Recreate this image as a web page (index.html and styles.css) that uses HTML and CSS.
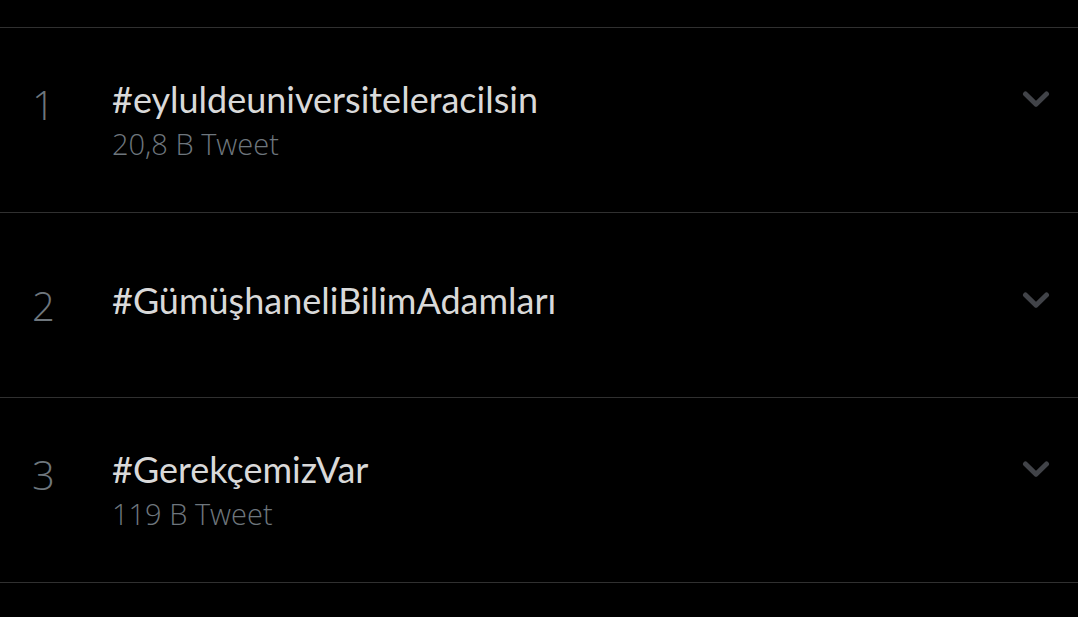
FILE: index.html
```html
<!DOCTYPE html>
<html lang="tr">
<head>
    <meta charset="UTF-8">
    <meta name="viewport" content="width=device-width, initial-scale=1.0">
    <title>Gündemler</title>
    <link rel="stylesheet" href="styles.css">
</head>
<body>

<ol class="trends">
    <li class="trend">
        <span class="rank">1</span>
        <div class="trend-info">
            <a class="trend-name" href="#">#eyluldeuniversiteleracilsin</a>
            <span class="trend-count">20,8 B Tweet</span>
        </div>
        <button class="trend-menu" type="button" aria-label="Diğer">
            <svg viewBox="0 0 28 18"><path d="M3.5 4L14 14.2L24.5 4"/></svg>
        </button>
    </li>
    <li class="trend">
        <span class="rank">2</span>
        <div class="trend-info">
            <a class="trend-name" href="#">#GümüşhaneliBilimAdamları</a>
        </div>
        <button class="trend-menu" type="button" aria-label="Diğer">
            <svg viewBox="0 0 28 18"><path d="M3.5 4L14 14.2L24.5 4"/></svg>
        </button>
    </li>
    <li class="trend">
        <span class="rank">3</span>
        <div class="trend-info">
            <a class="trend-name" href="#">#GerekçemizVar</a>
            <span class="trend-count">119 B Tweet</span>
        </div>
        <button class="trend-menu" type="button" aria-label="Diğer">
            <svg viewBox="0 0 28 18"><path d="M3.5 4L14 14.2L24.5 4"/></svg>
        </button>
    </li>
</ol>

</body>
</html>
```
FILE: styles.css
```css
body {
    margin: 0;
    background-color: #000;
    font-family: "Open Sans", "Noto Sans", sans-serif;
}

.trends {
    list-style: none;
    margin: 0;
    padding: 27px 0 0;
    border-bottom: 1px solid #303030;
}

.trend {
    display: grid;
    grid-template-columns: 80px 1fr 28px;
    align-content: center;
    min-height: 184px;
    padding: 0 28px 0 32px;
    border-top: 1px solid #303030;
}

.rank {
    padding: 5px 0 3px;
    font-size: 40px;
    font-weight: 300;
    line-height: 48px;
    color: #6e767d;
}

.trend-info {
    display: flex;
    flex-direction: column;
    align-items: flex-start;
    gap: 2px;
}

.trend-name {
    font-family: Lato, sans-serif;
    font-size: 36px;
    line-height: 46px;
    color: #d9d9d9;
    text-decoration: none;
}

.trend-count {
    font-size: 29px;
    font-weight: 300;
    line-height: 40px;
    color: #6e767d;
}

.trend-menu {
    display: flex;
    align-items: center;
    height: 46px;
    padding: 0;
    background: none;
    border: none;
    cursor: pointer;
}

.trend-menu svg {
    width: 28px;
    height: 18px;
    fill: none;
    stroke: #414348;
    stroke-width: 5;
    stroke-linecap: round;
    stroke-linejoin: round;
}
```
